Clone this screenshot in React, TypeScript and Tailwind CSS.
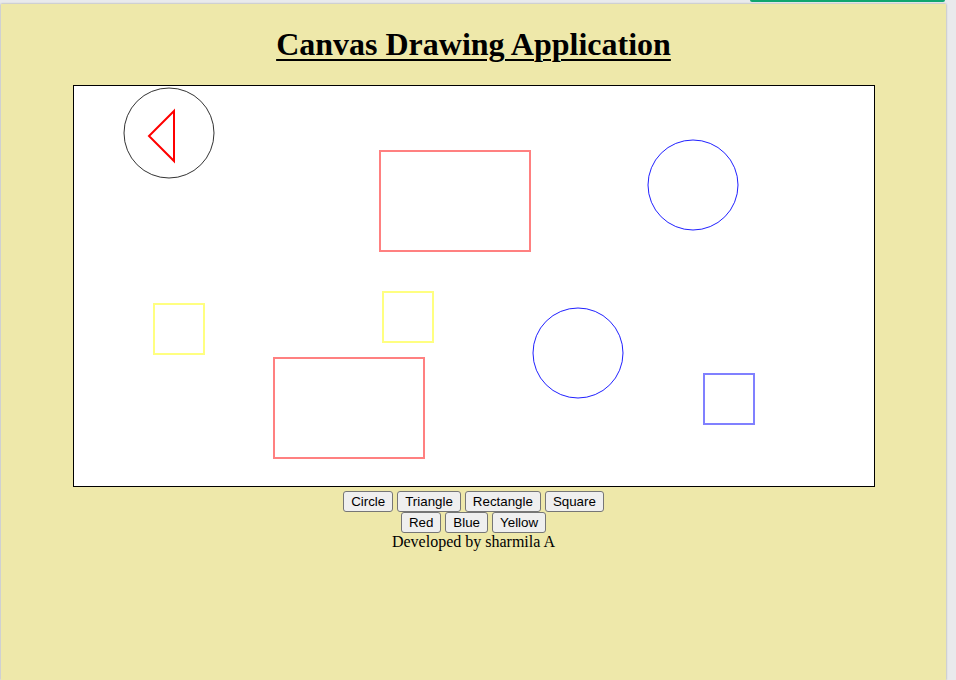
import React from "react";

const shapeButtons = ["Circle", "Triangle", "Rectangle", "Square"];
const colorButtons = ["Red", "Blue", "Yellow"];

function Btn({ label }: { label: string }) {
  return (
    <button className="h-[21px] px-[7px] border border-[#767676] rounded-[3px] bg-[#efefef] text-black text-[13.333px] leading-none font-['Liberation_Sans',Arial,sans-serif]">
      {label}
    </button>
  );
}

export default function App() {
  return (
    <div className="w-[956px] h-[680px] bg-[#e9eaec] overflow-hidden">
      <div className="h-[4px]">
        <div className="ml-[750px] w-[195px] h-[2px] bg-[#10a66f] rounded-b-[2px]" />
      </div>
      <div className="ml-[1px] w-[945px] h-[676px] bg-[#eee8aa] shadow-[0_0_2px_rgba(0,0,0,0.35)] flex flex-col items-center font-['Liberation_Serif','Times_New_Roman',serif] text-black">
        <h1 className="mt-[23px] text-[32px] font-bold underline leading-[35px] decoration-[2px] underline-offset-[4px]">
          Canvas Drawing Application
        </h1>
        <div className="mt-[23px] w-[802px] h-[402px] border border-black bg-white">
          <svg width="800" height="400" viewBox="0 0 800 400" className="block">
            <circle cx="95" cy="47" r="45" fill="none" stroke="#333" strokeWidth="1" />
            <polygon points="100,25 75,50 100,75" fill="none" stroke="#ff0000" strokeWidth="2" />
            <rect x="306" y="65" width="150" height="100" fill="none" stroke="#ff8080" strokeWidth="2" />
            <circle cx="619" cy="99" r="45" fill="none" stroke="#2020ff" strokeWidth="1" />
            <rect x="80" y="218" width="50" height="50" fill="none" stroke="#ffff80" strokeWidth="2" />
            <rect x="309" y="206" width="50" height="50" fill="none" stroke="#ffff80" strokeWidth="2" />
            <rect x="200" y="272" width="150" height="100" fill="none" stroke="#ff8080" strokeWidth="2" />
            <circle cx="504" cy="267" r="45" fill="none" stroke="#2020ff" strokeWidth="1" />
            <rect x="630" y="288" width="50" height="50" fill="none" stroke="#8080ff" strokeWidth="2" />
          </svg>
        </div>
        <div className="mt-[4px] flex gap-[4px]">
          {shapeButtons.map((b) => (
            <Btn key={b} label={b} />
          ))}
        </div>
        <div className="flex gap-[4px]">
          {colorButtons.map((b) => (
            <Btn key={b} label={b} />
          ))}
        </div>
        <div className="text-[16px] leading-[18px]">Developed by sharmila A</div>
      </div>
    </div>
  );
}
